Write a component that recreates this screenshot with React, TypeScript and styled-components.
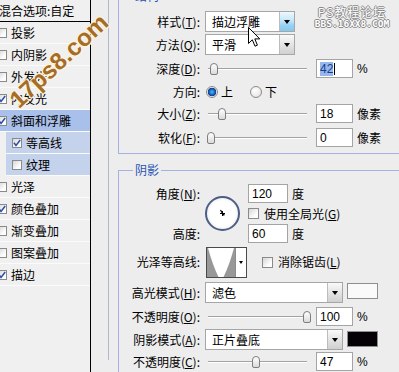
import React from "react";
import styled, { createGlobalStyle } from "styled-components";

const FONT = `"Noto Sans CJK SC", "Noto Sans", sans-serif`;

const GlobalStyle = createGlobalStyle`
  html, body { margin: 0; padding: 0; background: #ededed; }
  body { font-family: ${FONT}; font-size: 12px; color: #000; }
  * { box-sizing: border-box; }
`;

const Page = styled.div`
  position: relative;
  width: 399px;
  height: 372px;
  overflow: hidden;
  display: flex;
  background: #ededed;
  font-family: ${FONT};
  font-size: 12px;
  line-height: 1;
`;

/* ---------- left style list ---------- */
const StyleList = styled.div`
  flex: none;
  width: 91px;
  border-right: 1px solid #000;
  background: #f0f0f0;
  overflow: hidden;
`;

const ListHeader = styled.div`
  height: 22px;
  border-bottom: 1px solid #000;
  display: flex;
  align-items: center;
  margin-left: -1px;
  white-space: nowrap;
`;

const ListRow = styled.div<{ $sub?: boolean; $selected?: boolean }>`
  height: 22px;
  border-bottom: 1px solid #fbfbfb;
  display: flex;
  align-items: center;
  gap: 4px;
  white-space: nowrap;
  margin-left: ${(p) => (p.$sub ? 6 : 0)}px;
  padding-left: ${(p) => (p.$sub ? 6 : 0)}px;
  background: ${(p) => (p.$selected ? "#a9c0ea" : p.$sub ? "#c5d2ec" : "transparent")};
`;

const Box = styled.span<{ $size?: number; $ml?: number }>`
  flex: none;
  width: ${(p) => p.$size ?? 10}px;
  height: ${(p) => p.$size ?? 10}px;
  margin-left: ${(p) => p.$ml ?? 0}px;
  border: 1px solid #8a8a8a;
  background: linear-gradient(135deg, #d6d6d6, #fdfdfd 70%);
  display: inline-flex;
  align-items: center;
  justify-content: center;
`;

const CheckBox = ({ on, size, ml }: { on: boolean; size?: number; ml?: number }) => (
  <Box $size={size} $ml={ml}>
    {on && (
      <svg width="8" height="8" viewBox="0 0 8 8">
        <path d="M1 3.8 L3 6.4 L7.2 1" fill="none" stroke="#2d4fa6" strokeWidth="1.5" />
      </svg>
    )}
  </Box>
);

/* ---------- right settings area ---------- */
const Main = styled.div`
  flex: 1;
  min-width: 0;
  padding-left: 17px;
`;

const Panel = styled.div`
  height: 100%;
  border-left: 1px solid #b3b9cc;
  padding-left: 9px;
`;

const Group = styled.fieldset<{ $mt: number; $pb: number }>`
  margin: ${(p) => p.$mt}px 0 0 0;
  padding: 0 0 ${(p) => p.$pb}px 0;
  border: 1px solid #a3b2e2;
  border-right: none;
  min-width: 0;
`;

const Legend = styled.legend`
  margin-left: 14px;
  padding: 0 2px;
  color: #2853b4;
  font-size: 12px;
  line-height: 16px;
`;

const Row = styled.div<{ $mt?: number; $h?: number }>`
  display: flex;
  align-items: center;
  height: ${(p) => p.$h ?? 21}px;
  margin-top: ${(p) => p.$mt ?? 0}px;
  white-space: nowrap;
`;

const Label = styled.div`
  flex: none;
  width: 81px;
  margin-right: 5px;
  text-align: right;
  white-space: nowrap;
`;

const U = styled.span`
  text-decoration: underline;
`;

const Select = styled.div<{ $w: number }>`
  flex: none;
  display: flex;
  width: ${(p) => p.$w}px;
  height: 21px;
  border: 1px solid #a6a6a6;
  background: #fff;
`;

const SelectText = styled.div`
  flex: 1;
  padding-left: 6px;
  display: flex;
  align-items: center;
  white-space: nowrap;
`;

const SelectButton = styled.div<{ $hot?: boolean }>`
  flex: none;
  width: 15px;
  border-left: 1px solid #bcbcbc;
  display: flex;
  align-items: center;
  justify-content: center;
  background: ${(p) =>
    p.$hot
      ? "linear-gradient(#eef8fd, #c4e7f9 45%, #95d2f3 70%, #86c9ef)"
      : "linear-gradient(#fafafa, #e2e2e2 55%, #d0d0d0)"};
`;

const Arrow = styled.span`
  width: 0;
  height: 0;
  border-left: 3.5px solid transparent;
  border-right: 3.5px solid transparent;
  border-top: 4px solid #000;
`;

const Slider = styled.div`
  position: relative;
  flex: none;
  width: 104px;
  height: 14px;
  display: flex;
  align-items: center;
  padding: 0 2px 0 3px;
`;

const Track = styled.div`
  flex: 1;
  height: 2px;
  border-top: 1px solid #a2a2a2;
  border-bottom: 1px solid #fff;
`;

const Thumb = styled.div<{ $x: number }>`
  position: absolute;
  top: 1px;
  left: ${(p) => p.$x}px;
  width: 8px;
  height: 12px;
  border: 1px solid #7e7e7e;
  border-radius: 4px 4px 2px 2px;
  background: linear-gradient(#ffffff, #dadada);
`;

const NumBox = styled.div<{ $w?: number; $ml?: number }>`
  flex: none;
  width: ${(p) => p.$w ?? 37}px;
  height: 19px;
  margin-left: ${(p) => p.$ml ?? 0}px;
  border: 1px solid #a4a4a4;
  background: #fff;
  display: flex;
  align-items: center;
  padding-left: 3px;
  font-family: "Liberation Sans", Arial, sans-serif;
  font-size: 12px;
`;

const Selected = styled.span`
  background: #95b7ec;
  color: #1c3a8c;
  padding: 1px 0;
`;

const Caret = styled.span`
  width: 1px;
  height: 12px;
  background: #000;
  margin-left: 1px;
`;

const Unit = styled.span`
  margin-left: 4px;
  white-space: nowrap;
`;

const UnitLatin = styled(Unit)`
  font-family: "Liberation Sans", Arial, sans-serif;
`;

const Radio = styled.span<{ $on?: boolean; $ml?: number }>`
  flex: none;
  width: 12px;
  height: 12px;
  margin-left: ${(p) => p.$ml ?? 0}px;
  border-radius: 50%;
  border: 1px solid #8c8c8c;
  background: ${(p) =>
    p.$on
      ? "radial-gradient(circle at 50% 50%, #5cbaf2 0, #1b6cc6 2.5px, #0d3c86 4px, #f4f4f4 4.6px, #d8d8d8 100%)"
      : "radial-gradient(circle at 40% 35%, #ffffff 0, #ececec 60%, #cfcfcf 100%)"};
`;

const RadioText = styled.span`
  margin-left: 3px;
`;

const AngleBlock = styled.div`
  display: grid;
  grid-template-columns: 86px 43px auto;
  grid-template-rows: 21px 19px 21px;
  align-items: center;
  margin-top: 5px;
  white-space: nowrap;
`;

const Cell = styled.div<{ $row: number }>`
  grid-column: 3;
  grid-row: ${(p) => p.$row};
  display: flex;
  align-items: center;
`;

const GridLabel = styled(Label)<{ $row: number }>`
  grid-column: 1;
  grid-row: ${(p) => p.$row};
`;

const Dial = styled.div`
  grid-column: 2;
  grid-row: 1 / 4;
  width: 35px;
  height: 35px;
  border-radius: 50%;
  border: 2px solid #4d5d86;
  background: radial-gradient(circle, #ffffff 58%, #e6e6e6 82%, #c6c6c6 100%);
  display: flex;
`;

const CheckText = styled.span`
  margin-left: 5px;
`;

const Contour = styled.div`
  flex: none;
  display: flex;
  width: 41px;
  height: 31px;
  margin-left: 1px;
  border: 1px solid #4a4a4a;
  background: #fff;
`;

const ContourArrow = styled.div`
  flex: 1;
  border-left: 1px solid #8d8d8d;
  display: flex;
  align-items: center;
  justify-content: center;
`;

const SmallArrow = styled(Arrow)`
  border-left-width: 2.5px;
  border-right-width: 2.5px;
  border-top-width: 3px;
`;

const Swatch = styled.div<{ $c: string; $mt: number }>`
  flex: none;
  align-self: flex-start;
  width: 31px;
  height: 16px;
  margin-left: 4px;
  margin-top: ${(p) => p.$mt}px;
  border: 1px solid #8e8e8e;
  background: ${(p) => p.$c};
`;

/* ---------- overlays ---------- */
const Watermark = styled.div`
  position: absolute;
  left: -6px;
  top: 47px;
  width: 130px;
  text-align: center;
  transform: rotate(-43deg);
  font-family: "Liberation Sans", Arial, sans-serif;
  font-weight: bold;
  font-size: 24px;
  line-height: 28px;
  color: #a46d28;
  text-shadow: 1px 1px 0 #fff3dc, -1px -1px 0 #fff3dc, 1px -1px 0 #fff3dc, -1px 1px 0 #fff3dc;
  white-space: nowrap;
  pointer-events: none;
`;

const SiteMark = styled.div`
  position: absolute;
  left: 313px;
  top: 5px;
  width: 78px;
  display: flex;
  flex-direction: column;
  align-items: center;
  color: #fff;
  text-shadow: 1px 0 0 #8a8a8a, -1px 0 0 #8a8a8a, 0 1px 0 #8a8a8a, 0 -1px 0 #8a8a8a;
  pointer-events: none;
`;

const SiteLine1 = styled.span`
  font-size: 12px;
  line-height: 13px;
  letter-spacing: 1px;
`;

const SiteLine2 = styled.span`
  font-family: "DejaVu Sans Mono", monospace;
  font-weight: bold;
  font-size: 9.5px;
  line-height: 12px;
`;

const Cursor = styled.svg`
  position: absolute;
  left: 248px;
  top: 27px;
  pointer-events: none;
`;

type Item = { name: string; on: boolean; sub?: boolean; selected?: boolean };
const items: Item[] = [
  { name: "投影", on: false },
  { name: "内阴影", on: false },
  { name: "外发光", on: false },
  { name: "内发光", on: true },
  { name: "斜面和浮雕", on: true, selected: true },
  { name: "等高线", on: true, sub: true },
  { name: "纹理", on: false, sub: true },
  { name: "光泽", on: false },
  { name: "颜色叠加", on: true },
  { name: "渐变叠加", on: false },
  { name: "图案叠加", on: false },
  { name: "描边", on: true },
];

export default function App() {
  return (
    <>
      <GlobalStyle />
      <Page>
        <StyleList>
          <ListHeader>混合选项:自定</ListHeader>
          {items.map((it) => (
            <ListRow key={it.name} $sub={it.sub} $selected={it.selected}>
              <CheckBox on={it.on} ml={it.sub ? 0 : -3} />
              <span>{it.name}</span>
            </ListRow>
          ))}
        </StyleList>

        <Main>
          <Panel>
            <Group $mt={-12} $pb={5}>
              <Legend>结构</Legend>
              <Row $mt={7}>
                <Label>
                  样式(<U>T</U>):
                </Label>
                <Select $w={90}>
                  <SelectText>描边浮雕</SelectText>
                  <SelectButton $hot>
                    <Arrow />
                  </SelectButton>
                </Select>
              </Row>
              <Row $mt={2}>
                <Label>
                  方法(<U>Q</U>):
                </Label>
                <Select $w={90}>
                  <SelectText>平滑</SelectText>
                  <SelectButton>
                    <Arrow />
                  </SelectButton>
                </Select>
              </Row>
              <Row $mt={3}>
                <Label>
                  深度(<U>D</U>):
                </Label>
                <Slider>
                  <Track />
                  <Thumb $x={5} />
                </Slider>
                <NumBox $ml={7}>
                  <Selected>42</Selected>
                  <Caret />
                </NumBox>
                <UnitLatin>%</UnitLatin>
              </Row>
              <Row $mt={2}>
                <Label>方向:</Label>
                <Radio $on $ml={1} />
                <RadioText>上</RadioText>
                <Radio $ml={17} />
                <RadioText>下</RadioText>
              </Row>
              <Row $mt={1}>
                <Label>
                  大小(<U>Z</U>):
                </Label>
                <Slider>
                  <Track />
                  <Thumb $x={13} />
                </Slider>
                <NumBox $ml={7}>18</NumBox>
                <Unit>像素</Unit>
              </Row>
              <Row $mt={3}>
                <Label>
                  软化(<U>F</U>):
                </Label>
                <Slider>
                  <Track />
                  <Thumb $x={2} />
                </Slider>
                <NumBox $ml={7}>0</NumBox>
                <Unit>像素</Unit>
              </Row>
            </Group>

            <Group $mt={8} $pb={20}>
              <Legend>阴影</Legend>
              <AngleBlock>
                <GridLabel $row={1}>
                  角度(<U>N</U>):
                </GridLabel>
                <Dial>
                  <svg width="31" height="31" viewBox="0 0 31 31">
                    <path d="M15.5 15.5 L13.5 12" stroke="#000" strokeWidth="1.2" />
                    <path d="M13 15.5 H18 M15.5 13 V18" stroke="#000" strokeWidth="1" />
                    <rect x="15.5" y="15.5" width="2" height="2" fill="#000" />
                  </svg>
                </Dial>
                <Cell $row={1}>
                  <NumBox $w={40}>120</NumBox>
                  <Unit>度</Unit>
                </Cell>
                <Cell $row={2}>
                  <CheckBox on={false} size={11} />
                  <CheckText>
                    使用全局光(<U>G</U>)
                  </CheckText>
                </Cell>
                <GridLabel $row={3}>高度:</GridLabel>
                <Cell $row={3}>
                  <NumBox $w={40}>60</NumBox>
                  <Unit>度</Unit>
                </Cell>
              </AngleBlock>

              <Row $mt={2} $h={32}>
                <Label>光泽等高线:</Label>
                <Contour>
                  <svg width="28" height="29" viewBox="0 0 28 29">
                    <rect width="28" height="29" fill="#989898" />
                    <path d="M1 0 L27 0 Q22 18 16.5 29 L11.5 29 Q6 18 1 0 Z" fill="#fff" />
                  </svg>
                  <ContourArrow>
                    <SmallArrow />
                  </ContourArrow>
                </Contour>
                <CheckBox on={false} size={11} ml={15} />
                <CheckText>
                  消除锯齿(<U>L</U>)
                </CheckText>
              </Row>

              <Row $mt={4}>
                <Label>
                  高光模式(<U>H</U>):
                </Label>
                <Select $w={138}>
                  <SelectText>滤色</SelectText>
                  <SelectButton>
                    <Arrow />
                  </SelectButton>
                </Select>
                <Swatch $c="#fafafa" $mt={1} />
              </Row>
              <Row $mt={3}>
                <Label>
                  不透明度(<U>O</U>):
                </Label>
                <Slider>
                  <Track />
                  <Thumb $x={98} />
                </Slider>
                <NumBox $ml={7}>100</NumBox>
                <UnitLatin>%</UnitLatin>
              </Row>
              <Row $mt={2}>
                <Label>
                  阴影模式(<U>A</U>):
                </Label>
                <Select $w={138}>
                  <SelectText>正片叠底</SelectText>
                  <SelectButton>
                    <Arrow />
                  </SelectButton>
                </Select>
                <Swatch $c="#050005" $mt={2} />
              </Row>
              <Row $mt={1}>
                <Label>
                  不透明度(<U>C</U>):
                </Label>
                <Slider>
                  <Track />
                  <Thumb $x={47} />
                </Slider>
                <NumBox $ml={7}>47</NumBox>
                <UnitLatin>%</UnitLatin>
              </Row>
            </Group>
          </Panel>
        </Main>

        <Watermark>17ps8.com</Watermark>
        <SiteMark>
          <SiteLine1>PS教程论坛</SiteLine1>
          <SiteLine2>BBS.16XX8.COM</SiteLine2>
        </SiteMark>
        <Cursor width="13" height="21" viewBox="0 0 13 21">
          <path
            d="M0.5 0.5 L0.5 16.5 L4.3 12.8 L7 19.2 L9.4 18.2 L6.8 11.9 L11.8 11.9 Z"
            fill="#fff"
            stroke="#000"
            strokeWidth="1"
          />
        </Cursor>
      </Page>
    </>
  );
}
